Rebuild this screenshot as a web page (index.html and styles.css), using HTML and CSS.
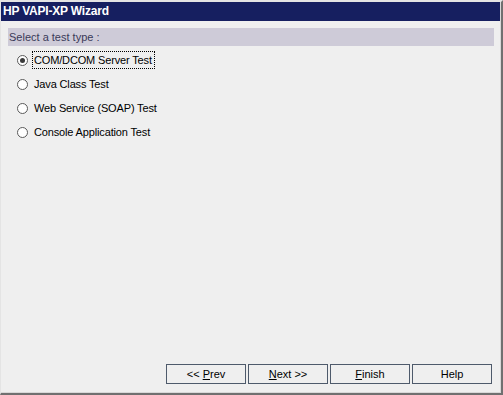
FILE: index.html
```html
<!DOCTYPE html>
<html>
<head>
<meta charset="utf-8">
<link rel="stylesheet" href="styles.css">
</head>
<body>
<div class="window">
  <div class="titlebar">HP VAPI-XP Wizard</div>
  <div class="content">
    <div class="section-head">Select a test type :</div>
    <div class="options">
      <div class="option"><span class="radio checked"></span><span class="label focus">COM/DCOM Server Test</span></div>
      <div class="option"><span class="radio"></span><span class="label">Java Class Test</span></div>
      <div class="option"><span class="radio"></span><span class="label">Web Service (SOAP) Test</span></div>
      <div class="option"><span class="radio"></span><span class="label">Console Application Test</span></div>
    </div>
    <div class="buttons">
      <div class="btn">&lt;&lt; <u>P</u>rev</div>
      <div class="btn"><u>N</u>ext &gt;&gt;</div>
      <div class="btn"><u>F</u>inish</div>
      <div class="btn">Help</div>
    </div>
  </div>
</div>
</body>
</html>
```
FILE: styles.css
```css
html, body {
  margin: 0;
  padding: 0;
  background: #efefef;
}
.window {
  width: 503px;
  height: 395px;
  box-sizing: border-box;
  border-top: 2px solid #e4e4e4;
  border-left: 1px solid #e4e4e4;
  border-right: 2px solid #707070;
  border-bottom: 2px solid #707070;
  box-shadow: inset -1px -1px 0 #d8d8d8;
  display: flex;
  flex-direction: column;
  font-family: "Liberation Sans", Arial, sans-serif;
  font-size: 11px;
  color: #000;
}
.titlebar {
  height: 19px;
  background: #161f60;
  color: #fff;
  font-weight: bold;
  font-size: 12px;
  line-height: 19px;
  padding-left: 2px;
  letter-spacing: -0.2px;
  margin-right: 1px;
}
.content {
  flex: 1;
  display: flex;
  flex-direction: column;
  padding: 7px 7px 0 7px;
}
.section-head {
  height: 18px;
  line-height: 18px;
  background: #cecbd8;
  color: #3a3a58;
  padding-left: 1px;
}
.options {
  display: flex;
  flex-direction: column;
  padding-top: 2px;
  flex: 1;
}
.option {
  height: 24px;
  display: flex;
  align-items: center;
  padding-left: 9px;
}
.radio {
  width: 9px;
  height: 9px;
  border: 1px solid #5a5a5a;
  border-radius: 50%;
  background: #fff;
  position: relative;
  margin-right: 4px;
}
.radio.checked::after {
  content: "";
  position: absolute;
  left: 2px;
  top: 2px;
  width: 5px;
  height: 5px;
  border-radius: 50%;
  background: #3a3a3a;
}
.label {
  padding: 2px 2px 2px 1px;
  border: 1px dotted transparent;
  letter-spacing: -0.15px;
}
.label.focus {
  border-color: #000;
}
.buttons {
  display: flex;
  justify-content: flex-end;
  gap: 2px;
  padding-right: 2px;
  padding-bottom: 9px;
}
.btn {
  width: 78px;
  height: 18px;
  border: 1px solid #4e5a6b;
  text-align: center;
  line-height: 18px;
  background: #efefef;
}
```
